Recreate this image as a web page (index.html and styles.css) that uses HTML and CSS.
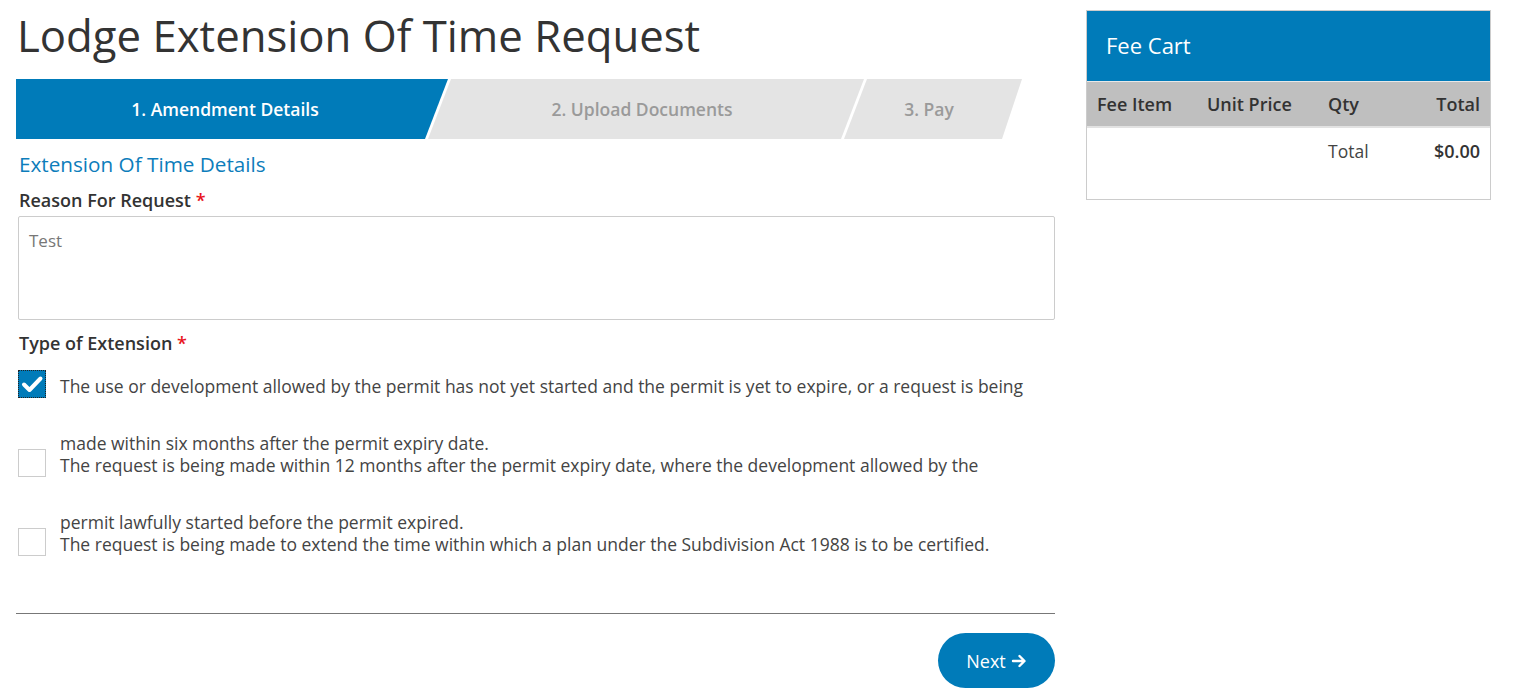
FILE: index.html
```html
<!DOCTYPE html>
<html lang="en">
<head>
<meta charset="utf-8">
<title>Lodge Extension Of Time Request</title>
<link rel="stylesheet" href="styles.css">
</head>
<body>
<div class="page">
  <main class="main">
    <h1 class="title">Lodge Extension Of Time Request</h1>
    <nav class="steps">
      <div class="step step-first active">1. Amendment Details</div>
      <div class="step step-mid">2. Upload Documents</div>
      <div class="step step-last">3. Pay</div>
    </nav>
    <h2 class="section-title">Extension Of Time Details</h2>
    <label class="field-label">Reason For Request <span class="req">*</span></label>
    <div class="textarea">Test</div>
    <div class="field-label type-label">Type of Extension <span class="req">*</span></div>
    <div class="options">
      <div class="opt">
        <span class="cb checked"><svg viewBox="0 0 28 28" width="28" height="28"><path d="M6 14.5 L11.5 20 L22.5 8.5" fill="none" stroke="#fff" stroke-width="4" stroke-linecap="round" stroke-linejoin="round"/></svg></span>
        <p class="opt-text"><span class="l1">The use or development allowed by the permit has not yet started and the permit is yet to expire, or a request is being</span><span class="l2">made within six months after the permit expiry date.</span></p>
      </div>
      <div class="opt">
        <span class="cb"></span>
        <p class="opt-text"><span class="l1">The request is being made within 12 months after the permit expiry date, where the development allowed by the</span><span class="l2">permit lawfully started before the permit expired.</span></p>
      </div>
      <div class="opt">
        <span class="cb"></span>
        <p class="opt-text"><span class="l1">The request is being made to extend the time within which a plan under the Subdivision Act 1988 is to be certified.</span></p>
      </div>
    </div>
    <hr class="divider">
    <div class="actions">
      <button class="btn-next">Next <svg class="arrow" viewBox="0 0 16 16" width="16" height="16"><path d="M2 8 H13 M8.5 3 L13.5 8 L8.5 13" fill="none" stroke="#fff" stroke-width="2.4" stroke-linecap="round" stroke-linejoin="round"/></svg></button>
    </div>
  </main>
  <aside class="cart">
    <div class="cart-head">Fee Cart</div>
    <table class="cart-table">
      <thead>
        <tr><th class="c-item">Fee Item</th><th class="c-price">Unit Price</th><th class="c-qty">Qty</th><th class="c-total">Total</th></tr>
      </thead>
      <tbody>
        <tr><td></td><td></td><td class="c-qty">Total</td><td class="c-total strong">$0.00</td></tr>
      </tbody>
    </table>
  </aside>
</div>
</body>
</html>
```

FILE: styles.css
```css
* { box-sizing: border-box; }
html, body { margin: 0; padding: 0; background: #fff; }
body {
  font-family: "Open Sans", "Liberation Sans", sans-serif;
  color: #333;
}
.page {
  display: flex;
  align-items: flex-start;
  gap: 31px;
  padding: 0 0 0 16px;
}
.main {
  width: 1039px;
  flex: none;
}
.title {
  margin: 5px 0 0 1px;
  font-size: 43.7px;
  font-weight: 400;
  line-height: 60px;
  color: #333;
  letter-spacing: 0;
}
.steps {
  display: flex;
  height: 60px;
  margin-top: 14px;
}
.step {
  height: 60px;
  display: flex;
  align-items: center;
  justify-content: center;
  font-size: 17.5px;
  font-weight: 600;
  color: #9a9a9a;
  background: #e4e4e4;
}
.step-first {
  width: 432px;
  padding-right: 14px;
  clip-path: polygon(0 0, 100% 0, calc(100% - 23px) 100%, 0 100%);
}
.step-mid {
  width: 436px;
  margin-left: -20px;
  padding-right: 8px;
  clip-path: polygon(23px 0, 100% 0, calc(100% - 23px) 100%, 0 100%);
}
.step-last {
  width: 178px;
  margin-left: -20px;
  padding-right: 8px;
  clip-path: polygon(23px 0, 100% 0, calc(100% - 20px) 100%, 0 100%);
}
.step.active {
  background: #007bb9;
  color: #fff;
}
.section-title {
  margin: 11px 0 0 3px;
  font-size: 20.7px;
  font-weight: 400;
  line-height: 28px;
  color: #0d7dbb;
}
.field-label {
  display: block;
  margin: 10px 0 0 3px;
  font-size: 18px;
  font-weight: 600;
  line-height: 25px;
  color: #333;
}
.req { color: #e8141c; }
.textarea {
  margin: 3px 0 0 2px;
  height: 104px;
  border: 1px solid #ccc;
  border-radius: 2px;
  padding: 12px 10px;
  font-size: 17px;
  line-height: 24px;
  color: #777;
}
.type-label { margin-top: 11px; }
.options {
  margin-top: 14px;
  padding-left: 2px;
}
.opt {
  display: flex;
  align-items: flex-start;
  gap: 14px;
}
.opt + .opt { margin-top: -5px; }
.cb {
  flex: none;
  width: 28px;
  height: 28px;
  border: 1px solid #ccc;
  background: #fff;
  display: block;
}
.cb.checked {
  background: #007bb9;
  border: 1px dotted #222;
}
.cb svg { display: block; margin: -1px; }
.opt-text {
  margin: 5px 0 0 0;
  font-size: 17.5px;
  line-height: 22px;
  color: #444;
}
.opt-text span { display: block; }
.opt-text .l2 { margin-top: 35px; }
.divider {
  margin: 57px 0 0 0;
  border: 0;
  border-top: 1px solid #777;
  height: 0;
}
.actions {
  display: flex;
  justify-content: flex-end;
  margin-top: 19px;
}
.btn-next {
  width: 117px;
  height: 55px;
  border: 0;
  border-radius: 28px;
  background: #007bb9;
  color: #fff;
  font-family: "Open Sans", "Liberation Sans", sans-serif;
  font-size: 18px;
  font-weight: 400;
  display: flex;
  align-items: center;
  justify-content: center;
  gap: 5px;
  padding: 0;
}
.arrow { display: block; }
.cart {
  width: 405px;
  flex: none;
  margin-top: 10px;
  border: 1px solid #ccc;
  padding-bottom: 26px;
}
.cart-head {
  height: 71px;
  background: #007bb9;
  color: #fff;
  font-size: 22px;
  line-height: 68px;
  padding-left: 19px;
  border-bottom: 1px solid #e8e8e8;
}
.cart-table {
  width: 100%;
  border-collapse: collapse;
  font-size: 18px;
}
.cart-table th {
  background: #bfbfbf;
  font-weight: 600;
  color: #333;
  height: 45px;
  text-align: left;
  border-bottom: 2px solid #e2e2e2;
  padding: 0 10px;
}
.cart-table td {
  height: 46px;
  padding: 0 10px;
  color: #444;
  text-align: left;
}
.cart-table .c-total { text-align: right; }
.cart-table .strong { font-weight: 600; color: #333; }
.c-item { width: 110px; }
.c-price { width: 121px; }
.c-qty { width: 80px; }
.cart-table td.c-qty { font-size: 17.5px; }
```
